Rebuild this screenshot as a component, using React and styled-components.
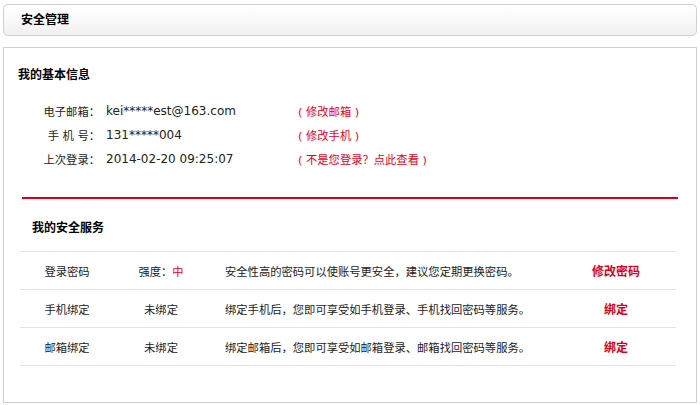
import React from 'react'
import styled, { createGlobalStyle } from 'styled-components'

const GlobalStyle = createGlobalStyle`
  html, body {
    margin: 0;
    padding: 0;
    background: #fff;
  }
  body {
    font-family: "DejaVu Sans", "Noto Sans CJK SC", sans-serif;
    font-size: 11.3px;
    color: #222;
  }
`

const info = [
  { label: '电子邮箱：', value: 'kei*****est@163.com', link: '( 修改邮箱 )' },
  { label: '手 机 号：', value: '131*****004', link: '( 修改手机 )' },
  { label: '上次登录：', value: '2014-02-20 09:25:07', link: '( 不是您登录？点此查看 )' },
]

const services = [
  {
    name: '登录密码',
    status: '强度：',
    level: '中',
    desc: '安全性高的密码可以使账号更安全，建议您定期更换密码。',
    action: '修改密码',
  },
  {
    name: '手机绑定',
    status: '未绑定',
    desc: '绑定手机后，您即可享受如手机登录、手机找回密码等服务。',
    action: '绑定',
  },
  {
    name: '邮箱绑定',
    status: '未绑定',
    desc: '绑定邮箱后，您即可享受如邮箱登录、邮箱找回密码等服务。',
    action: '绑定',
  },
]

export default function App() {
  return (
    <Page>
      <GlobalStyle />
      <Header>
        <HeaderTitle>安全管理</HeaderTitle>
      </Header>
      <Panel>
        <SectionTitle $indent={14} $top={19}>我的基本信息</SectionTitle>
        <InfoList>
          {info.map((row) => (
            <InfoRow key={row.label}>
              <Label>{row.label}</Label>
              <Value>{row.value}</Value>
              <RedLink>{row.link}</RedLink>
            </InfoRow>
          ))}
        </InfoList>
        <Divider />
        <SectionTitle $indent={28} $top={21}>我的安全服务</SectionTitle>
        <Table>
          {services.map((s) => (
            <Row key={s.name}>
              <Cell>{s.name}</Cell>
              <Cell>
                {s.status}
                {s.level && <Level>{s.level}</Level>}
              </Cell>
              <DescCell>{s.desc}</DescCell>
              <Cell><Action>{s.action}</Action></Cell>
            </Row>
          ))}
        </Table>
      </Panel>
    </Page>
  )
}

const Page = styled.div`
  padding: 4px 3px 0;
`

const Header = styled.div`
  height: 30px;
  border: 1px solid #cfcfcf;
  border-radius: 5px;
  background: linear-gradient(to bottom, #ffffff 0%, #f9f9f9 50%, #efefef 100%);
  display: flex;
  align-items: center;
  padding-left: 17px;
`

const HeaderTitle = styled.h2`
  margin: 0;
  font-size: 12px;
  font-weight: bold;
  color: #000;
  line-height: 30px;
`

const Panel = styled.div`
  margin-top: 11px;
  height: 356px;
  box-sizing: border-box;
  border: 1px solid #cfcfcf;
  display: flex;
  flex-direction: column;
`

const SectionTitle = styled.h3`
  margin: 0;
  padding: ${(p) => p.$top}px 0 0 ${(p) => p.$indent}px;
  font-size: 12px;
  font-weight: bold;
  color: #000;
  line-height: 16px;
`

const InfoList = styled.div`
  margin-top: 16px;
  padding-left: 36px;
  display: flex;
  flex-direction: column;
`

const InfoRow = styled.div`
  display: flex;
  align-items: center;
  height: 24px;
`

const Label = styled.span`
  width: 60px;
  text-align: right;
  white-space: pre;
`

const Value = styled.span`
  width: 192px;
  margin-left: 6px;
  font-size: 12px;
`

const RedLink = styled.a`
  color: #e3001b;
  cursor: pointer;
  white-space: pre;
`

const Divider = styled.div`
  margin: 26px 18px 0;
  height: 2px;
  background: #d9001b;
  box-shadow: 0 0 1px #f3a0a8;
`

const Table = styled.div`
  margin: 15px 20px 0 16px;
  border-bottom: 1px solid #e3e3e3;
`

const Row = styled.div`
  display: grid;
  grid-template-columns: 94px 94px 1fr 120px;
  align-items: center;
  height: 37px;
  border-top: 1px solid #e3e3e3;
`

const Cell = styled.div`
  text-align: center;
`

const DescCell = styled.div`
  padding-left: 17px;
  white-space: nowrap;
`

const Level = styled.span`
  color: #e3001b;
`

const Action = styled.a`
  color: #d9001b;
  font-weight: bold;
  font-size: 12px;
  cursor: pointer;
`
